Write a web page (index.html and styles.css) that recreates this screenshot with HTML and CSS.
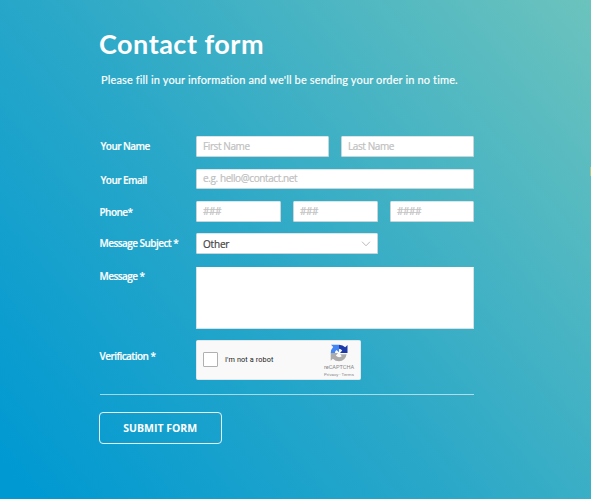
FILE: index.html
```html
<!DOCTYPE html>
<html lang="en">
<head>
<meta charset="utf-8">
<title>Contact form</title>
<link rel="stylesheet" href="styles.css">
</head>
<body>
<main class="page">
  <h1 class="title">Contact form</h1>
  <p class="intro">Please fill in your information and we'll be sending your order in no time.</p>
  <form class="form">
    <div class="row name-row">
      <span class="label l-name">Your Name</span>
      <div class="fields">
        <div class="input half">First Name</div>
        <div class="input half">Last Name</div>
      </div>
    </div>
    <div class="row email-row">
      <span class="label l-email">Your Email</span>
      <div class="fields"><div class="input wide email">e.g. hello@contact.net</div></div>
    </div>
    <div class="row phone-row">
      <span class="label l-phone">Phone*</span>
      <div class="fields">
        <div class="input third hashes">###</div>
        <div class="input third hashes">###</div>
        <div class="input third hashes">####</div>
      </div>
    </div>
    <div class="row subject-row">
      <span class="label l-subject">Message Subject *</span>
      <div class="input select"><span>Other</span>
        <svg class="chevron" viewBox="0 0 10 6"><path d="M1 .7 5 4.8 9 .7"/></svg>
      </div>
    </div>
    <div class="row message-row">
      <span class="label l-message">Message *</span>
      <div class="textarea"></div>
    </div>
    <div class="row captcha-row">
      <span class="label l-verify">Verification *</span>
      <div class="captcha">
        <span class="box"></span>
        <span class="robot">I'm not a robot</span>
        <div class="brand">
          <svg class="logo" viewBox="0 0 18 18">
            <path fill="#1c3aa9" d="M9 .7Q13 .8 15.2 3.2L17.5 1V9H10L12.2 6.400Q11 4.800 9 4.700Z"/>
            <path fill="#4285f4" d="M9 .7V8.200L6.500 6Q5 7 4.900 9H.7Q.8 5.200 3.200 2.900L1 .7Z"/>
            <path fill="#ababab" d="M.7 9H8L5.800 11.400Q8.500 14.500 11.800 12.200L10.200 10.300H16.600Q15.500 17.100 9 17.300Q5.200 17.200 2.900 14.700L.7 16.700Z"/>
          </svg>
          <span class="brand-name">reCAPTCHA</span>
          <span class="terms">Privacy - Terms</span>
        </div>
      </div>
    </div>
    <div class="divider"></div>
    <button class="submit" type="button">SUBMIT FORM</button>
  </form>
</main>
<span class="edge-dot"></span>
</body>
</html>
```
FILE: styles.css
```css
* { box-sizing: border-box; }
html { height: 100%; }
body {
  position: relative;
  margin: 0;
  height: 499px;
  overflow: hidden;
  background: linear-gradient(50deg, #0099d2 3%, #2ba8c8 46%, #6cc3bd 100%);
  font-family: "Open Sans", "Liberation Sans", sans-serif;
  color: #fff;
}
.page { width: 375px; margin-left: 99px; padding-top: 28px; }
.title {
  margin: 0;
  font: 700 27px/32px Lato, sans-serif;
  letter-spacing: .5px;
  white-space: nowrap;
}
.intro {
  margin: 12px 0 0 2px;
  font: 400 11px/16px Lato, sans-serif;
  letter-spacing: .14px;
  white-space: nowrap;
  -webkit-text-stroke: .15px #fff;
}
.form { margin-top: 48px; }
.row { display: flex; align-items: flex-start; }
.label {
  flex: 0 0 97px;
  font-size: 10px;
  line-height: 14px;
  font-weight: 600;
  letter-spacing: -.55px;
  white-space: nowrap;
  -webkit-text-stroke: .15px #fff;
}
.fields { display: flex; gap: 12px; width: 278px; }
.input {
  height: 21px;
  padding: 0 6px;
  background: #fff;
  border: 1px solid #c9d5d8;
  border-top-color: #dce5e7;
  border-radius: 1.500px;
  color: #c0c0c0;
  font-size: 10px;
  line-height: 18px;
  letter-spacing: -.4px;
  white-space: nowrap;
  -webkit-text-stroke: .2px currentColor;
}
.half { flex: 1; }
.third { flex: 0 0 85px; }
.third:last-child { flex-basis: 84px; }
.hashes { letter-spacing: -.5px; }
.wide { width: 278px; }
.email { height: 20px; line-height: 17px; }
.name-row { height: 33px; }
.email-row { height: 32px; }
.phone-row { height: 32px; }
.subject-row { height: 34px; }
.message-row { height: 73px; }
.captcha-row { height: 54px; }
.l-name { padding: 3px 0 0 1.500px; }
.l-email { padding: 4px 0 0 1.500px; }
.l-phone { padding: 4px 0 0 .5px; }
.l-subject { padding: 3px 0 0 .5px; }
.l-message { padding: 2px 0 0 .5px; }
.l-verify { padding: 9px 0 0 .5px; }
.select {
  width: 182px;
  display: flex;
  align-items: center;
  justify-content: space-between;
  color: #444;
}
.select span { padding-top: 1px; letter-spacing: -.2px; }
.chevron { width: 10px; height: 6px; fill: none; stroke: #bbb; stroke-width: 1; }
.textarea { width: 278px; height: 62px; background: #fff; border: 1px solid #d8e2e4; border-top-color: #fff; border-radius: 1px; }
.captcha {
  display: flex;
  align-items: center;
  width: 165px;
  height: 40px;
  padding: 0 5px 0 6px;
  background: #f9f9f9;
  border: 1px solid #e2e8ea;
  border-radius: 1.500px;
}
.box { width: 15px; height: 15px; margin-top: -2px; background: #fff; border: 1px solid #b0b0b0; border-radius: 1px; }
.robot { margin-left: 7px; font: 7.300px/12px Roboto, sans-serif; color: #222; letter-spacing: .12px; white-space: nowrap; }
.brand { display: flex; flex-direction: column; align-items: center; width: 32px; margin-left: auto; color: #888; font-family: Roboto, sans-serif; }
.logo { width: 18px; height: 18px; margin-top: 2px; }
.brand-name { font-size: 5.600px; line-height: 8px; margin-top: 1px; }
.terms { font-size: 4.400px; line-height: 7px; white-space: nowrap; }
.divider { height: 1px; margin-left: 1px; background: rgba(255,255,255,.6); }
.submit {
  display: block;
  width: 122.500px;
  height: 32px;
  margin-top: 17px;
  padding: 0;
  background: transparent;
  border: 1px solid #e4f5fa;
  border-radius: 4px;
  color: #fff;
  font: 700 10.500px/30px "Open Sans", sans-serif;
}
.edge-dot { position: absolute; right: 0; top: 167px; width: 1px; height: 9px; background: #a9c983; }
```
